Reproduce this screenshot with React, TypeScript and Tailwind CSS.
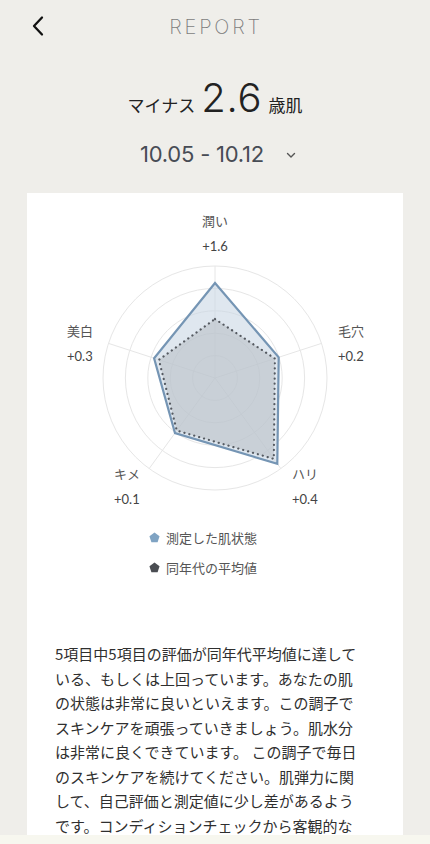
import React from 'react';

const CX = 188;
const CY = 173;
const RING_STEP = 22.4;

// angles of the 5 axes, clockwise from the top
const ANGLES = [-90, -18, 54, 126, 198];

const measured = [95, 67, 106, 68, 64];
const average = [59, 63, 100, 65, 59];

function pt(r: number, deg: number) {
  const a = (deg * Math.PI) / 180;
  return [CX + r * Math.cos(a), CY + r * Math.sin(a)];
}

function poly(values: number[]) {
  return values.map((r, i) => pt(r, ANGLES[i]).map((n) => n.toFixed(1)).join(',')).join(' ');
}

const labels = [
  { name: '潤い', value: '+1.6', x: 188, y: 21, anchor: 'middle' as const },
  { name: '毛穴', value: '+0.2', x: 311, y: 131, anchor: 'start' as const },
  { name: 'ハリ', value: '+0.4', x: 265, y: 274, anchor: 'start' as const },
  { name: 'キメ', value: '+0.1', x: 87, y: 274, anchor: 'start' as const },
  { name: '美白', value: '+0.3', x: 40, y: 131, anchor: 'start' as const },
];

const RadarChart: React.FC = () => {
  return (
    <svg width="376" height="318" viewBox="0 0 376 318" className="block">
      {[1, 2, 3, 4, 5].map((i) => (
        <circle key={i} cx={CX} cy={CY} r={RING_STEP * i} fill="none" stroke="#e6e6e6" strokeWidth="1" />
      ))}
      {ANGLES.map((a) => {
        const [x, y] = pt(RING_STEP * 5, a);
        return <line key={a} x1={CX} y1={CY} x2={x} y2={y} stroke="#e6e6e6" strokeWidth="1" />;
      })}
      <polygon points={poly(measured)} fill="#c9d7e4" fillOpacity="0.6" stroke="#7595b4" strokeWidth="2.2" strokeLinejoin="miter" />
      <polygon points={poly(average)} fill="#b4b9c0" fillOpacity="0.5" stroke="#555a61" strokeWidth="2.2" strokeDasharray="0.1 5" strokeLinecap="round" />
      {labels.map((l) => (
        <g key={l.name} fontFamily="'Noto Sans CJK JP', 'Noto Sans', sans-serif" fontSize="13">
          <text x={l.x} y={l.y} textAnchor={l.anchor} fill="#555">{l.name}</text>
          <text x={l.x} y={l.y + 25} textAnchor={l.anchor} fill="#444" fontFamily="Lato, 'Noto Sans', sans-serif">{l.value}</text>
        </g>
      ))}
    </svg>
  );
};

const Pentagon: React.FC<{ color: string }> = ({ color }) => (
  <svg width="11" height="11" viewBox="0 0 10 10" className="shrink-0">
    <polygon points="5,0.5 9.6,3.8 7.8,9.3 2.2,9.3 0.4,3.8" fill={color} />
  </svg>
);

export default function App() {
  return (
    <div
      className="relative h-[844px] w-[430px] overflow-hidden bg-[#efeeea] text-[#333]"
      style={{ fontFamily: "Inter, 'Noto Sans CJK JP', sans-serif" }}
    >
      {/* header */}
      <div className="relative flex h-[54px] items-center justify-center">
        <button className="absolute left-[30px] top-[15px] p-0">
          <svg width="16" height="22" viewBox="0 0 16 22" fill="none">
            <path d="M12 2.5 L4 11 L12 19.5" stroke="#111" strokeWidth="2.3" strokeLinecap="round" strokeLinejoin="round" />
          </svg>
        </button>
        <span className="pl-[2px] text-[20px] font-extralight tracking-[0.14em] text-[#7d7d7d]">REPORT</span>
      </div>

      <div className="mt-[24px] flex items-baseline justify-center gap-[6px] text-[#222]">
        <span className="text-[17px]" style={{ fontFamily: "'Noto Sans CJK JP', sans-serif" }}>マイナス</span>
        <span className="text-[40px] font-light leading-none tracking-[0.02em]">2.6</span>
        <span className="text-[17px]" style={{ fontFamily: "'Noto Sans CJK JP', sans-serif" }}>歳肌</span>
      </div>

      <div className="mt-[20px] flex items-center justify-center gap-[22px] pl-[6px] text-[#474c55]">
        <span className="text-[22px] tracking-[-0.01em]">10.05 - 10.12</span>
        <svg width="10" height="7" viewBox="0 0 10 7" fill="none" className="mt-[2px]">
          <path d="M1.5 1.5 L5 5 L8.5 1.5" stroke="#555" strokeWidth="1.4" strokeLinecap="round" strokeLinejoin="round" />
        </svg>
      </div>

      {/* card */}
      <div className="mx-[27px] mt-[22px] w-[376px] bg-white pt-[12px] pb-[40px]">
        <RadarChart />

        <div
          className="mt-[5px] flex flex-col items-center gap-[10px] pr-[4px] text-[13px] text-[#555]"
          style={{ fontFamily: "'Noto Sans CJK JP', sans-serif" }}
        >
          <div className="flex w-[128px] items-center gap-[6px]">
            <Pentagon color="#7fa3c3" />
            <span>測定した肌状態</span>
          </div>
          <div className="flex w-[128px] items-center gap-[6px]">
            <Pentagon color="#4a4d52" />
            <span>同年代の平均値</span>
          </div>
        </div>

        <p
          className="mt-[65px] ml-[28px] w-[304px] text-[15px] leading-[24.5px] text-[#2f2f2f]"
          style={{ fontFamily: "'Noto Sans CJK JP', sans-serif" }}
        >
          5項目中5項目の評価が同年代平均値に達している、もしくは上回っています。あなたの肌の状態は非常に良いといえます。この調子でスキンケアを頑張っていきましょう。肌水分は非常に良くできています。 この調子で毎日のスキンケアを続けてください。肌弾力に関して、自己評価と測定値に少し差があるようです。コンディションチェックから客観的な自己評価をつけてみましょう。
        </p>
      </div>

      <div className="absolute bottom-0 left-0 h-[9px] w-full bg-[#f7f7ef]" />
    </div>
  );
}
